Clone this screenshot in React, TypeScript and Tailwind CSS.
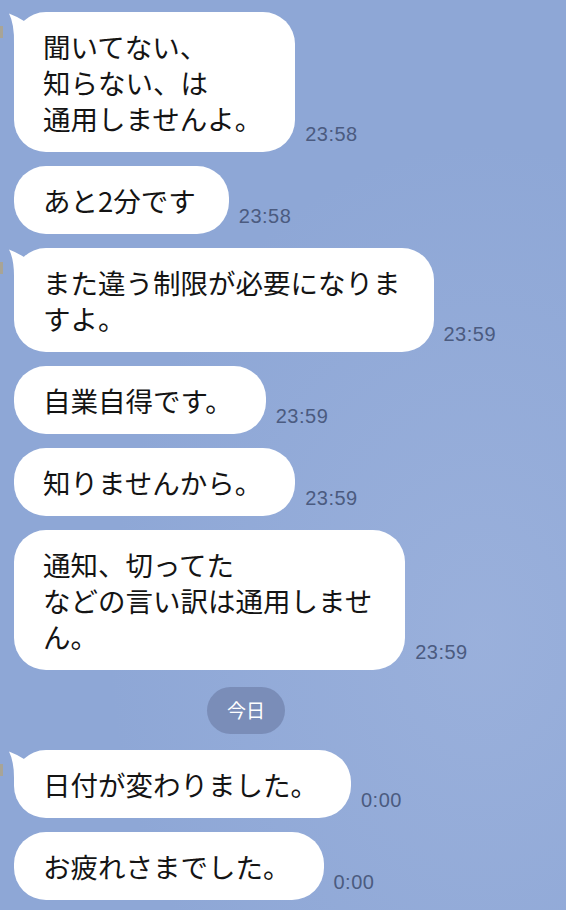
import React from "react";

type Msg = { lines: string[]; time: string; tail?: boolean };

const jp = { fontFamily: '"Noto Sans CJK JP", "Noto Sans", sans-serif' };
const latin = { fontFamily: '"Liberation Sans", Arial, sans-serif' };

function Tail() {
  return (
    <svg
      className="absolute left-[-6px] top-0"
      width="30"
      height="32"
      viewBox="0 0 30 32"
    >
      <path d="M1 1.5 Q9 4.5 16 9 L26 32 L6 32 Q6.5 12 1 1.5 Z" fill="#ffffff" />
    </svg>
  );
}

function Bubble({ m }: { m: Msg }) {
  return (
    <div className="relative flex items-end">
      {m.tail && (
        <div className="absolute left-[-14px] top-[14px] h-[12px] w-[3px] bg-[#b3a27a] opacity-70" />
      )}
      <div className="relative">
        {m.tail && <Tail />}
        <div
          className="relative rounded-[32px] bg-white py-4 pl-[29px] pr-[33px] text-[27.5px] leading-[36px] text-[#141414] whitespace-nowrap"
          style={jp}
        >
          {m.lines.map((l, i) => (
            <div key={i}>{l}</div>
          ))}
        </div>
      </div>
      <div
        className="mb-[8px] ml-[10px] text-[20px] leading-none tracking-[0.5px] text-[#4b5b80]"
        style={latin}
      >
        {m.time}
      </div>
    </div>
  );
}

export default function App() {
  const before: Msg[] = [
    { lines: ["聞いてない、", "知らない、は", "通用しませんよ。"], time: "23:58", tail: true },
    { lines: ["あと2分です"], time: "23:58" },
    { lines: ["また違う制限が必要になりま", "すよ。"], time: "23:59", tail: true },
    { lines: ["自業自得です。"], time: "23:59" },
    { lines: ["知りませんから。"], time: "23:59" },
    { lines: ["通知、切ってた", "などの言い訳は通用しませ", "ん。"], time: "23:59" },
  ];
  const after: Msg[] = [
    { lines: ["日付が変わりました。"], time: "0:00", tail: true },
    { lines: ["お疲れさまでした。"], time: "0:00" },
  ];
  return (
    <div className="relative h-[910px] w-[566px] overflow-hidden bg-[#8ea7d6]">
      <div className="pointer-events-none absolute inset-0 bg-[radial-gradient(ellipse_at_85%_70%,rgba(168,187,226,0.45),rgba(142,167,214,0)_55%)]" />
      <div className="relative flex flex-col gap-[14px] pl-[14px] pt-[12px]">
        {before.map((m, i) => (
          <Bubble key={i} m={m} />
        ))}
        <div className="mt-[3px] mb-[2px] flex">
          <div
            className="ml-[193px] flex h-[47px] w-[78px] items-center justify-center rounded-full bg-[#7a8db8] text-[19px] text-white"
            style={jp}
          >
            今日
          </div>
        </div>
        {after.map((m, i) => (
          <Bubble key={i} m={m} />
        ))}
      </div>
    </div>
  );
}
